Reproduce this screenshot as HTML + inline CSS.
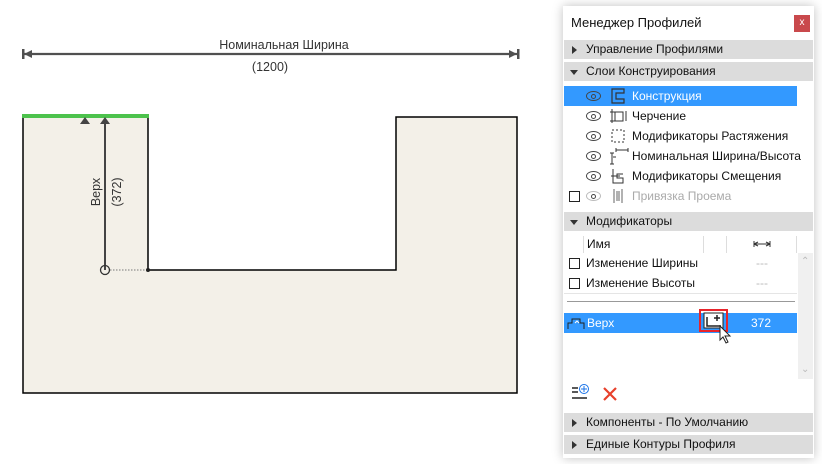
<!DOCTYPE html>
<html><head><meta charset="utf-8"><style>
body{margin:0;width:822px;height:464px;background:#fff;position:relative;overflow:hidden;font-family:"Liberation Sans",sans-serif;font-size:12px;color:#111}
.abs{position:absolute;white-space:nowrap}
.panel{left:563px;top:6px;width:251px;height:452px;background:#fff;box-shadow:0 0 10px rgba(0,0,0,.25)}
.hdr{position:absolute;left:564px;width:249px;height:19px;background:#dcdcdc;line-height:19px;font-size:12px;white-space:nowrap}
.hdr span{position:absolute;left:22px}
.tri{position:absolute;left:8px;top:6px;width:0;height:0}
.tr{border-left:5px solid #333;border-top:4px solid transparent;border-bottom:4px solid transparent}
.td{border-top:5px solid #333;border-left:4px solid transparent;border-right:4px solid transparent;top:8px;left:6px}
.row{position:absolute;left:564px;width:233px;height:20px;line-height:20px;white-space:nowrap}
.eye{position:absolute;left:22px;top:5px;width:13px;height:8px;border:1.3px solid #444;border-radius:50%/50%}
.eye:after{content:"";position:absolute;left:4px;top:1.5px;width:3px;height:3px;border-radius:50%;border:1px solid #444}
.cb{position:absolute;left:5px;top:5px;width:9px;height:9px;border:1px solid #222;background:#fff}
</style></head><body>
<svg class="abs" style="left:0;top:0" width="560" height="464">
<polygon points="23,116 148,116 148,270 396,270 396,117 517,117 517,393 23,393" fill="#f3f0e8" stroke="#000" stroke-width="1.5"/>
<line x1="22" y1="116" x2="149" y2="116" stroke="#4cc24c" stroke-width="4"/>
<line x1="23" y1="54" x2="517" y2="54" stroke="#505050" stroke-width="2.2"/>
<rect x="22" y="49" width="2.5" height="10" fill="#505050"/><polygon points="24,54 32,50 32,58" fill="#505050"/>
<rect x="517" y="49" width="2.5" height="10" fill="#505050"/><polygon points="517,54 509,50 509,58" fill="#505050"/>
<text x="284" y="49" font-size="12.5" text-anchor="middle" fill="#333" font-family="Liberation Sans">Номинальная Ширина</text>
<text x="270" y="71" font-size="12.5" text-anchor="middle" fill="#333" font-family="Liberation Sans">(1200)</text>
<polygon points="85,117 80,124 90,124" fill="#444"/>
<polygon points="105,117 100,124 110,124" fill="#444"/>
<line x1="105" y1="120" x2="105" y2="270" stroke="#444" stroke-width="2"/>
<circle cx="105" cy="270" r="4.5" fill="none" stroke="#333" stroke-width="1.3"/>
<line x1="110" y1="270" x2="147" y2="270" stroke="#777" stroke-dasharray="1.5,1.5"/>
<circle cx="148" cy="270" r="2" fill="#222"/>
<text transform="translate(100,192) rotate(-90)" font-size="12.5" text-anchor="middle" fill="#333" font-family="Liberation Sans">Верх</text>
<text transform="translate(121,192) rotate(-90)" font-size="12.5" text-anchor="middle" fill="#333" font-family="Liberation Sans">(372)</text>
</svg>
<div class="abs panel"></div>
<div class="abs" style="left:571px;top:15px;font-size:13px">Менеджер Профилей</div>
<div class="abs" style="left:794px;top:15px;width:16px;height:17px;background:#c9494c;color:#fff;font-size:10px;text-align:center;line-height:16px">x</div>
<div class="hdr" style="top:40px"><div class="tri tr"></div><span>Управление Профилями</span></div>
<div class="hdr" style="top:62px"><div class="tri td"></div><span>Слои Конструирования</span></div>
<div class="row" style="top:86px;background:#3399ff;color:#fff"><div class="eye"></div><svg class="abs" style="left:47px;top:2px" width="14" height="16"><path d="M1,1H13V5H5V11H13V15H1Z" fill="none" stroke="#333" stroke-width="1.2"/></svg><span class="abs" style="left:68px">Конструкция</span></div>
<div class="row" style="top:106px"><div class="eye"></div><svg class="abs" style="left:45px;top:2px" width="20" height="16"><path d="M3,1V15M1,4H14V13H1M6,4V13M17,3V13" fill="none" stroke="#333"/></svg><span class="abs" style="left:68px">Черчение</span></div>
<div class="row" style="top:126px"><div class="eye"></div><svg class="abs" style="left:47px;top:3px" width="14" height="14"><rect x="1" y="1" width="12" height="12" fill="none" stroke="#333" stroke-dasharray="2,2"/></svg><span class="abs" style="left:68px">Модификаторы Растяжения</span></div>
<div class="row" style="top:146px"><div class="eye"></div><svg class="abs" style="left:45px;top:1px" width="20" height="18"><path d="M7,3H19M7,1V5M19,1V5M3,6V17M1,6H5M1,17H5M4,10H7" fill="none" stroke="#333"/></svg><span class="abs" style="left:68px">Номинальная Ширина/Высота</span></div>
<div class="row" style="top:166px"><div class="eye"></div><svg class="abs" style="left:46px;top:2px" width="16" height="16"><path d="M3,1V15H13V10H7V6H13M1,8H10" fill="none" stroke="#333"/></svg><span class="abs" style="left:68px">Модификаторы Смещения</span></div>
<div class="row" style="top:186px;color:#aaa"><div class="cb"></div><div class="eye" style="border-color:#bbb"></div><svg class="abs" style="left:48px;top:2px" width="12" height="16"><path d="M2,1V15M10,1V15M5,3V13M7,3V13" fill="none" stroke="#666"/></svg><span class="abs" style="left:68px">Привязка Проема</span></div>
<div class="hdr" style="top:212px"><div class="tri td"></div><span>Модификаторы</span></div>
<div class="abs" style="left:583px;top:236px;width:214px;height:17px;border-left:1px solid #ddd;line-height:17px"><span style="margin-left:3px">Имя</span></div>
<div class="abs" style="left:703px;top:236px;width:1px;height:17px;background:#ddd"></div>
<div class="abs" style="left:726px;top:236px;width:1px;height:17px;background:#ddd"></div>
<div class="abs" style="left:796px;top:236px;width:1px;height:17px;background:#ddd"></div>
<svg class="abs" style="left:753px;top:240px" width="18" height="8"><path d="M1,1V7M17,1V7M1,4H17M1,4L5,2M1,4L5,6M17,4L13,2M17,4L13,6" stroke="#333" fill="none"/></svg>
<div class="row" style="top:253px"><div class="cb"></div><span class="abs" style="left:22px">Изменение Ширины</span><span class="abs" style="left:192px;color:#bbb">---</span></div>
<div class="row" style="top:273px"><div class="cb"></div><span class="abs" style="left:22px">Изменение Высоты</span><span class="abs" style="left:192px;color:#bbb">---</span></div>
<div class="abs" style="left:564px;top:293px;width:233px;height:1px;background:#e5e5e5"></div>
<div class="abs" style="left:567px;top:301px;width:228px;height:1px;background:#999"></div>
<div class="row" style="top:313px;background:#3399ff;color:#fff"><svg class="abs" style="left:3px;top:2px" width="18" height="16"><path d="M1,14V8H5V4H13V8H17V14" fill="none" stroke="#222"/><path d="M8,8L10,6L12,8" stroke="#fff" fill="none"/></svg><span class="abs" style="left:23px">Верх</span><span class="abs" style="left:187px">372</span></div>
<div class="abs" style="left:699px;top:309px;width:29px;height:23px;border:2px solid #e8242b;box-sizing:border-box"></div>
<svg class="abs" style="left:703px;top:312px" width="22" height="18"><rect x="1" y="1" width="19" height="15" fill="#fff" stroke="#222"/><path d="M4,5V14H18M14,3V9M11,6H17" stroke="#222" stroke-width="1.5" fill="none"/></svg>
<svg class="abs" style="left:719px;top:325px" width="14" height="20"><path d="M1,1V15L4,12L7,18L9,17L6,11H11Z" fill="#fff" stroke="#222"/></svg>
<div class="abs" style="left:798px;top:253px;width:15px;height:126px;background:#f0f0f0"></div>
<div class="abs" style="left:801px;top:256px;color:#bbb;font-size:10px">&#8963;</div>
<div class="abs" style="left:801px;top:364px;color:#bbb;font-size:10px">&#8964;</div>
<svg class="abs" style="left:571px;top:383px" width="20" height="18"><path d="M1,5H7M1,9H7M1,15H16" stroke="#222" stroke-width="1.5"/><circle cx="13" cy="6" r="4.5" fill="none" stroke="#1a73e8"/><path d="M13,3V9M10,6H16" stroke="#1a73e8"/></svg>
<svg class="abs" style="left:603px;top:387px" width="14" height="14"><path d="M1,1L13,13M13,1L1,13" stroke="#e8402b" stroke-width="2.2"/></svg>
<div class="hdr" style="top:413px"><div class="tri tr"></div><span>Компоненты - По Умолчанию</span></div>
<div class="hdr" style="top:435px"><div class="tri tr"></div><span>Единые Контуры Профиля</span></div>
</body></html>
